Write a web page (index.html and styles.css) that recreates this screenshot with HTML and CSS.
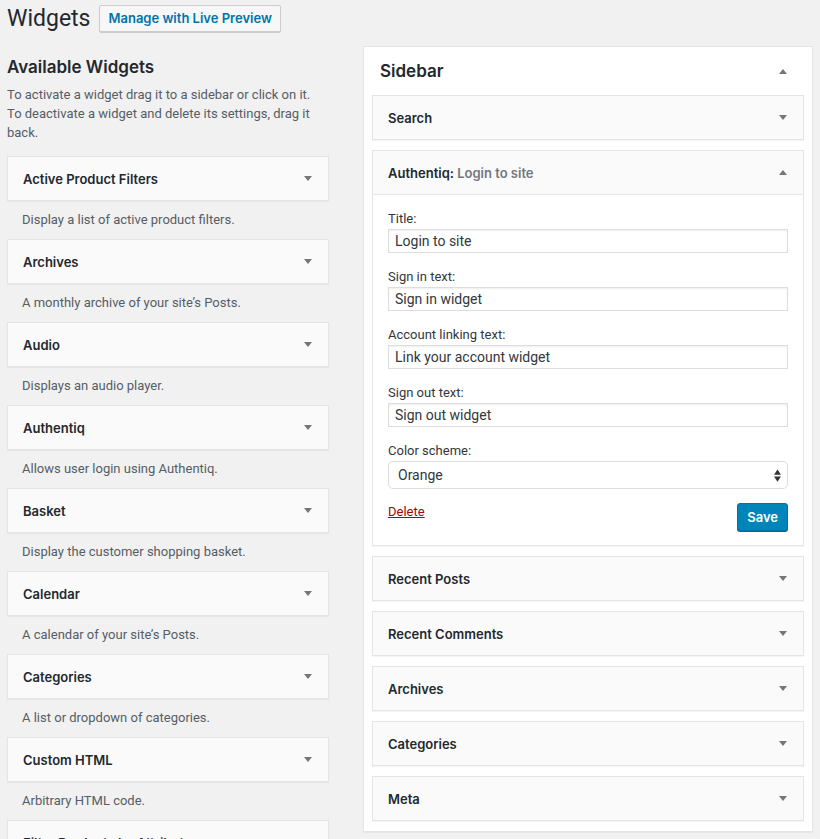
FILE: index.html
```html
<!DOCTYPE html>
<html>
<head>
<meta charset="utf-8">
<link rel="stylesheet" href="styles.css">
</head>
<body>
<div class="wrap">
  <div class="page-head">
    <h1>Widgets</h1>
    <a class="btn-secondary">Manage with Live Preview</a>
  </div>
  <div class="columns">
    <div class="left">
      <h2>Available Widgets</h2>
      <p class="intro">To activate a widget drag it to a sidebar or click on it. To deactivate a widget and delete its settings, drag it back.</p>
      <div class="avail">
        <div class="widget"><span class="wt">Active Product Filters</span><svg class="arr" viewBox="0 0 10 6"><path d="M0 0h10L5 6z"/></svg></div>
        <p class="desc">Display a list of active product filters.</p>
        <div class="widget"><span class="wt">Archives</span><svg class="arr" viewBox="0 0 10 6"><path d="M0 0h10L5 6z"/></svg></div>
        <p class="desc">A monthly archive of your site’s Posts.</p>
        <div class="widget"><span class="wt">Audio</span><svg class="arr" viewBox="0 0 10 6"><path d="M0 0h10L5 6z"/></svg></div>
        <p class="desc">Displays an audio player.</p>
        <div class="widget"><span class="wt">Authentiq</span><svg class="arr" viewBox="0 0 10 6"><path d="M0 0h10L5 6z"/></svg></div>
        <p class="desc">Allows user login using Authentiq.</p>
        <div class="widget"><span class="wt">Basket</span><svg class="arr" viewBox="0 0 10 6"><path d="M0 0h10L5 6z"/></svg></div>
        <p class="desc">Display the customer shopping basket.</p>
        <div class="widget"><span class="wt">Calendar</span><svg class="arr" viewBox="0 0 10 6"><path d="M0 0h10L5 6z"/></svg></div>
        <p class="desc">A calendar of your site’s Posts.</p>
        <div class="widget"><span class="wt">Categories</span><svg class="arr" viewBox="0 0 10 6"><path d="M0 0h10L5 6z"/></svg></div>
        <p class="desc">A list or dropdown of categories.</p>
        <div class="widget"><span class="wt">Custom HTML</span><svg class="arr" viewBox="0 0 10 6"><path d="M0 0h10L5 6z"/></svg></div>
        <p class="desc">Arbitrary HTML code.</p>
        <div class="widget"><span class="wt">Filter Products by Attribute</span><svg class="arr" viewBox="0 0 10 6"><path d="M0 0h10L5 6z"/></svg></div>
        <p class="desc">Display a list of attributes to filter products in your store.</p>
      </div>
    </div>
    <div class="right">
      <div class="sidebar">
        <div class="sb-head"><h2>Sidebar</h2><svg class="arr" viewBox="0 0 10 6"><path d="M0 6h10L5 0z"/></svg></div>
        <div class="widget in"><span class="wt">Search</span><svg class="arr" viewBox="0 0 10 6"><path d="M0 0h10L5 6z"/></svg></div>
        <div class="widget in open">
          <div class="w-top"><span class="wt">Authentiq: <span class="in-title">Login to site</span></span><svg class="arr" viewBox="0 0 10 6"><path d="M0 6h10L5 0z"/></svg></div>
          <div class="w-form">
            <div class="field"><label>Title:</label><div class="input">Login to site</div></div>
            <div class="field"><label>Sign in text:</label><div class="input">Sign in widget</div></div>
            <div class="field"><label>Account linking text:</label><div class="input">Link your account widget</div></div>
            <div class="field"><label>Sign out text:</label><div class="input">Sign out widget</div></div>
            <div class="field"><label>Color scheme:</label><div class="select"><span>Orange</span><svg class="updown" viewBox="0 0 8 14"><path d="M0 6h8L4 0z M0 8h8L4 14z"/></svg></div></div>
            <div class="actions"><a class="delete">Delete</a><a class="btn-primary">Save</a></div>
          </div>
        </div>
        <div class="widget in"><span class="wt">Recent Posts</span><svg class="arr" viewBox="0 0 10 6"><path d="M0 0h10L5 6z"/></svg></div>
        <div class="widget in"><span class="wt">Recent Comments</span><svg class="arr" viewBox="0 0 10 6"><path d="M0 0h10L5 6z"/></svg></div>
        <div class="widget in"><span class="wt">Archives</span><svg class="arr" viewBox="0 0 10 6"><path d="M0 0h10L5 6z"/></svg></div>
        <div class="widget in"><span class="wt">Categories</span><svg class="arr" viewBox="0 0 10 6"><path d="M0 0h10L5 6z"/></svg></div>
        <div class="widget in"><span class="wt">Meta</span><svg class="arr" viewBox="0 0 10 6"><path d="M0 0h10L5 6z"/></svg></div>
      </div>
    </div>
  </div>
</div>
</body>
</html>
```

FILE: styles.css
```css
* { box-sizing: border-box; }
html, body { margin: 0; padding: 0; }
body {
  background: #f1f1f1;
  font-family: Roboto, "Liberation Sans", sans-serif;
  font-size: 13px;
  color: #23282d;
  overflow: hidden;
  height: 839px;
}
.wrap { padding: 0 7px; }
.page-head {
  display: flex;
  align-items: center;
  gap: 9px;
  height: 36px;
}
.page-head h1 {
  margin: 0;
  font-size: 23px;
  font-weight: 400;
  line-height: 29px;
  color: #23282d;
}
.btn-secondary {
  display: inline-block;
  height: 27px;
  line-height: 25px;
  padding: 0 8px;
  border: 1px solid #ccc;
  border-radius: 2px;
  background: #f7f7f7;
  color: #0073aa;
  font-family: Inter, Roboto, sans-serif;
  font-weight: 600;
  font-size: 13px;
  box-shadow: 0 1px 0 #ccc;
}
.columns { display: flex; align-items: flex-start; }
.left { width: 322px; }
.right { width: 450px; margin-left: 34px; margin-top: 10px; }
.left h2 {
  margin: 20px 0 0;
  font-family: Inter, Roboto, sans-serif;
  font-size: 17px;
  line-height: 22px;
  font-weight: 600;
  color: #23282d;
}
.intro {
  margin: 7px 0 14px;
  padding-right: 6px;
  line-height: 19px;
  color: #555d66;
}
.widget {
  display: flex;
  align-items: center;
  justify-content: space-between;
  height: 45px;
  padding: 0 15px;
  background: #fafafa;
  border: 1px solid #e5e5e5;
  box-shadow: 0 1px 1px rgba(0,0,0,.04);
}
.wt {
  font-family: Inter, Roboto, sans-serif;
  font-weight: 600;
  font-size: 13px;
  color: #23282d;
}
.arr { width: 8px; height: 5px; fill: #72777c; flex: none; margin-right: 1px; }
.desc {
  margin: 0;
  padding: 9px 15px 10px;
  line-height: 19px;
  color: #555d66;
}
.sidebar {
  background: #fff;
  border: 1px solid #e5e5e5;
  box-shadow: 0 1px 1px rgba(0,0,0,.04);
  padding: 0 8px;
}
.sb-head {
  height: 48px;
  display: flex;
  align-items: center;
  justify-content: space-between;
  padding: 0 16px 0 8px;
}
.sb-head h2 {
  margin: 0;
  font-family: Inter, Roboto, sans-serif;
  font-size: 17px;
  font-weight: 600;
  line-height: 22px;
}
.widget.in { margin-bottom: 10px; }
.widget.open {
  display: block;
  height: auto;
  padding: 0;
}
.w-top {
  display: flex;
  align-items: center;
  justify-content: space-between;
  height: 44px;
  padding: 0 15px;
  border-bottom: 1px solid #e5e5e5;
}
.in-title { color: #72777c; }
.w-form {
  background: #fff;
  padding: 14px 15px 14px 15px;
}
.field { margin-bottom: 14px; }
.field label { display: block; line-height: 19px; margin-bottom: 1px; color: #32373c; }
.input {
  height: 24px;
  line-height: 22px;
  border: 1px solid #ddd;
  box-shadow: inset 0 1px 2px rgba(0,0,0,.07);
  padding: 0 6px;
  font-size: 14px;
  color: #32373c;
  background: #fff;
}
.select {
  display: flex;
  align-items: center;
  justify-content: space-between;
  height: 28px;
  border: 1px solid #ddd;
  border-radius: 5px;
  padding: 0 6px 0 9px;
  font-size: 14px;
  color: #32373c;
  background: #fff;
}
.updown { width: 7px; height: 13px; fill: #333; }
.actions {
  display: flex;
  justify-content: space-between;
  align-items: flex-start;
}
.field:last-of-type { margin-bottom: 13px; }
.delete {
  color: #a00;
  text-decoration: underline;
  line-height: 17px;
}
.btn-primary {
  display: inline-block;
  height: 28px;
  line-height: 26px;
  padding: 0 9px;
  background: #0085ba;
  border: 1px solid #0073aa;
  border-radius: 3px;
  color: #fff;
  font-family: Inter, Roboto, sans-serif;
  font-weight: 600;
  font-size: 13px;
  box-shadow: 0 1px 0 #006799;
}
```
